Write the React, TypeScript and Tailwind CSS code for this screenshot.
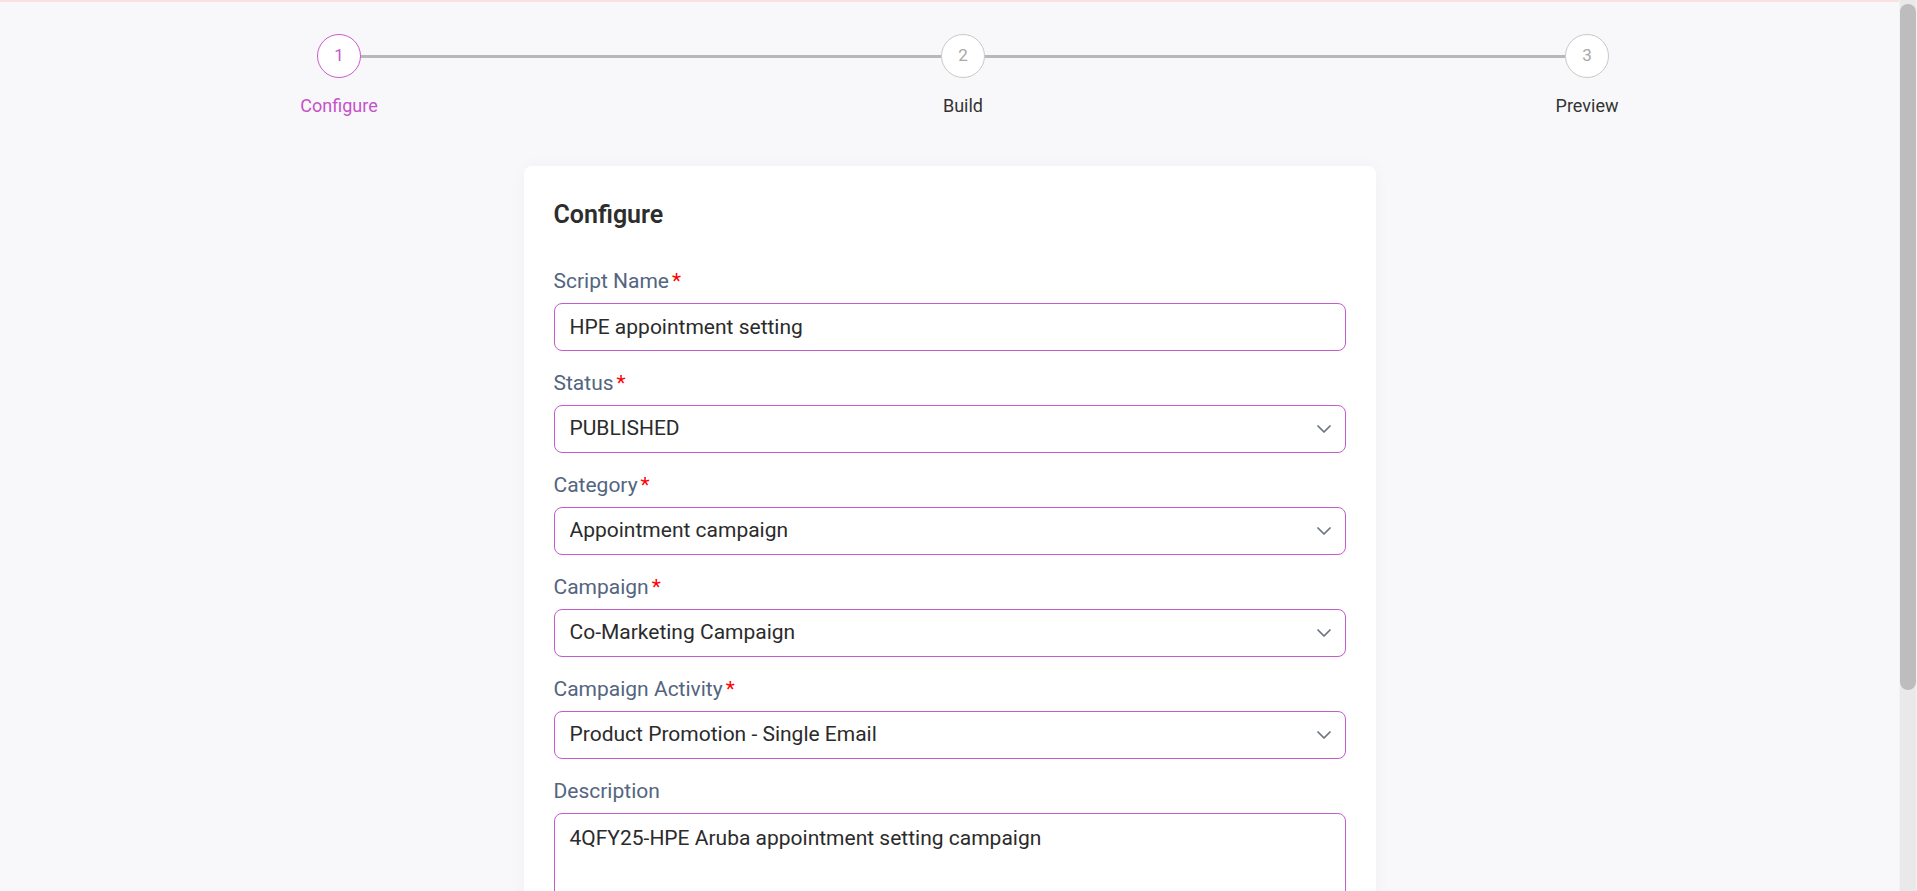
import { ChevronDown } from 'lucide-react'

const steps = [
  { n: 1, label: 'Configure', active: true },
  { n: 2, label: 'Build', active: false },
  { n: 3, label: 'Preview', active: false },
]

const selects = [
  { label: 'Status', value: 'PUBLISHED', options: ['DRAFT', 'PUBLISHED', 'ARCHIVED'] },
  { label: 'Category', value: 'Appointment campaign', options: ['Appointment campaign', 'Lead generation', 'Survey'] },
  { label: 'Campaign', value: 'Co-Marketing Campaign', options: ['Co-Marketing Campaign', 'Partner Campaign'] },
  {
    label: 'Campaign Activity',
    value: 'Product Promotion - Single Email',
    options: ['Product Promotion - Single Email', 'Product Promotion - Multi Email', 'Webinar Invite'],
  },
]

function Label({ text, required }: { text: string; required?: boolean }) {
  return (
    <label className="mb-2 flex h-[28px] items-center text-[21px] leading-[28px] text-[#536580]">
      {text}
      {required && <span className="ml-[3px] text-[#ff0000]">*</span>}
    </label>
  )
}

function Stepper() {
  return (
    <div className="ml-[317px] flex w-[1292px] items-start">
      {steps.map((s, i) => (
        <div key={s.n} className={i === 0 ? 'flex items-start' : 'flex flex-1 items-start'}>
          {i > 0 && <div className="mt-[21px] h-[3px] flex-1 bg-[#b8b8b8]" />}
          <div className="flex w-11 flex-col items-center">
            <div
              className={
                s.active
                  ? 'flex h-11 w-11 items-center justify-center rounded-full border border-[#c85bd0] bg-white text-[17px] text-[#c45bc9]'
                  : 'flex h-11 w-11 items-center justify-center rounded-full border border-[#c9c9c9] bg-white text-[17px] text-[#a8a8a8]'
              }
            >
              {s.n}
            </div>
            <span
              className={
                s.active
                  ? 'mt-4 whitespace-nowrap text-[18px] leading-[24px] text-[#c452c9]'
                  : 'mt-4 whitespace-nowrap text-[18px] leading-[24px] text-[#333333]'
              }
            >
              {s.label}
            </span>
          </div>
        </div>
      ))}
    </div>
  )
}

export default function App() {
  return (
    <div className="flex h-screen bg-[#f8f8fa] font-['Roboto','Liberation_Sans',sans-serif]">
      <div className="flex min-w-0 flex-1 flex-col overflow-hidden">
        <div className="h-[2px] shrink-0 bg-[#fbe2e2]" />
        <div className="pt-8 pb-16">
          <Stepper />

          <div className="mx-auto mt-12 w-[852px] rounded-lg bg-white px-[30px] pt-8 pb-8 shadow-[0_0_16px_rgba(0,0,0,0.035)]">
            <h2 className="mb-[35px] text-[25px] leading-[34px] font-semibold text-[#2d2d2d]">Configure</h2>

            <div className="flex flex-col gap-[18px]">
              <div className="flex flex-col">
                <Label text="Script Name" required />
                <input
                  defaultValue="HPE appointment setting"
                  className="h-12 w-full rounded-lg border border-[#c25ccf] bg-white px-[15px] text-[21px] text-[#2b2b2b] outline-none"
                />
              </div>

              {selects.map((f) => (
                <div key={f.label} className="flex flex-col">
                  <Label text={f.label} required />
                  <div className="relative">
                    <select
                      defaultValue={f.value}
                      className="h-12 w-full appearance-none rounded-lg border border-[#c25ccf] bg-white px-[15px] text-[21px] text-[#2b2b2b] outline-none"
                    >
                      {f.options.map((o) => (
                        <option key={o}>{o}</option>
                      ))}
                    </select>
                    <ChevronDown
                      size={24}
                      strokeWidth={1.75}
                      className="pointer-events-none absolute top-3 right-[10px] text-[#6b7280]"
                    />
                  </div>
                </div>
              ))}

              <div className="flex flex-col">
                <Label text="Description" />
                <textarea
                  defaultValue="4QFY25-HPE Aruba appointment setting campaign"
                  className="h-[150px] w-full resize-none rounded-lg border border-[#c25ccf] bg-white px-[15px] py-[10px] text-[21px] leading-[28px] text-[#2b2b2b] outline-none"
                />
              </div>
            </div>
          </div>
        </div>
      </div>

      {/* page scrollbar */}
      <div className="w-[18px] shrink-0 border-x border-[#f3f3f3] bg-[#e9e9e9]">
        <div className="mt-[4px] h-[686px] rounded-full bg-[#bdbdbd]" />
      </div>
    </div>
  )
}
